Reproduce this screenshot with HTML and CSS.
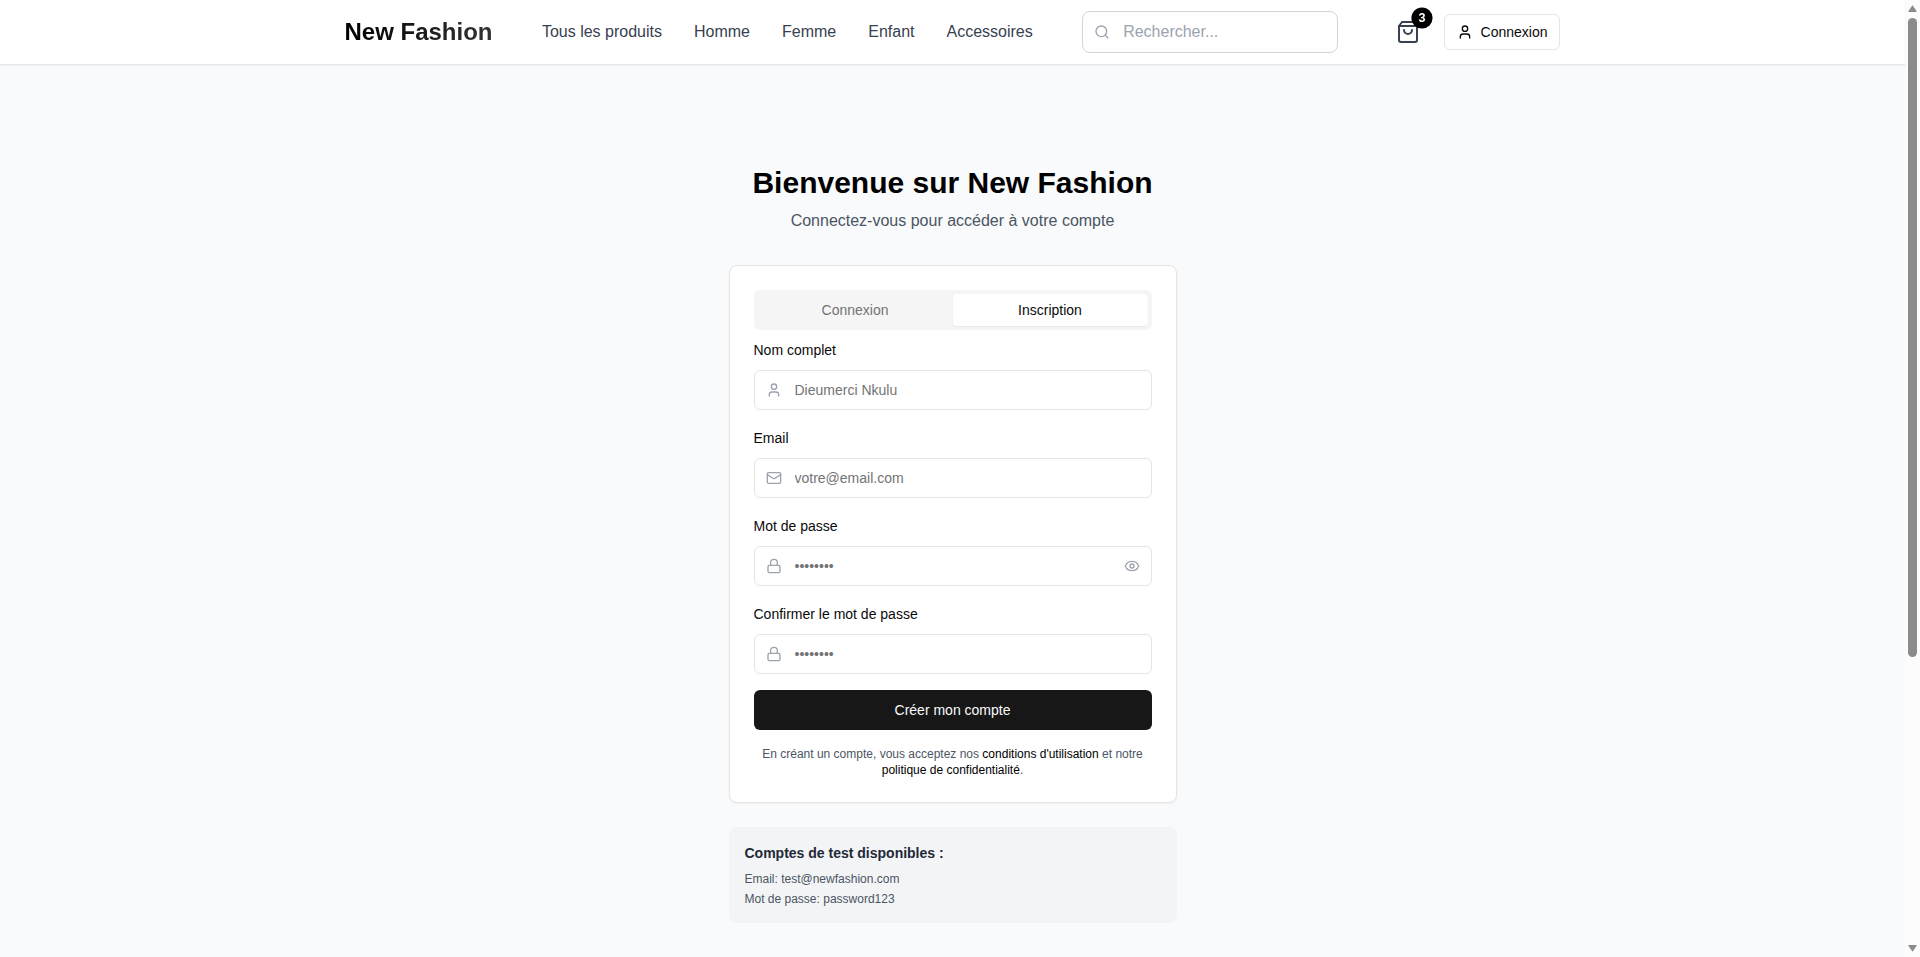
FILE: index.html
```html
<!DOCTYPE html>
<html lang="fr">
<head>
<meta charset="utf-8">
<title>New Fashion</title>
<link rel="stylesheet" href="styles.css">
</head>
<body>
<div class="viewport">
  <div class="page">
    <header class="header">
      <div class="header-inner">
        <a class="logo">New Fashion</a>
        <nav class="nav">
          <a>Tous les produits</a>
          <a>Homme</a>
          <a>Femme</a>
          <a>Enfant</a>
          <a>Accessoires</a>
        </nav>
        <div class="search">
          <svg class="icon field-icon" viewBox="0 0 24 24"><circle cx="11" cy="11" r="8"/><path d="m21 21-4.3-4.3"/></svg>
          <input class="search-input" type="text" placeholder="Rechercher...">
        </div>
        <div class="actions">
          <button class="cart" aria-label="Panier">
            <svg class="icon cart-icon" viewBox="0 0 24 24"><path d="M6 2 3 6v14a2 2 0 0 0 2 2h14a2 2 0 0 0 2-2V6l-3-4Z"/><path d="M3 6h18"/><path d="M16 10a4 4 0 0 1-8 0"/></svg>
            <span class="badge">3</span>
          </button>
          <button class="login">
            <svg class="icon" viewBox="0 0 24 24"><path d="M19 21v-2a4 4 0 0 0-4-4H9a4 4 0 0 0-4 4v2"/><circle cx="12" cy="7" r="4"/></svg>
            <span>Connexion</span>
          </button>
        </div>
      </div>
    </header>
    <main class="main">
      <div class="column">
        <div class="intro">
          <h1 class="title">Bienvenue sur New Fashion</h1>
          <p class="subtitle">Connectez-vous pour accéder à votre compte</p>
        </div>
        <section class="card">
          <div class="tabs">
            <button class="tab">Connexion</button>
            <button class="tab tab-active">Inscription</button>
          </div>
          <form class="form">
            <div class="group">
              <label class="label">Nom complet</label>
              <div class="field">
                <svg class="icon field-icon" viewBox="0 0 24 24"><path d="M19 21v-2a4 4 0 0 0-4-4H9a4 4 0 0 0-4 4v2"/><circle cx="12" cy="7" r="4"/></svg>
                <input class="input" type="text" placeholder="Dieumerci Nkulu">
              </div>
            </div>
            <div class="group">
              <label class="label">Email</label>
              <div class="field">
                <svg class="icon field-icon" viewBox="0 0 24 24"><rect width="20" height="16" x="2" y="4" rx="2"/><path d="m22 7-8.97 5.7a1.94 1.94 0 0 1-2.06 0L2 7"/></svg>
                <input class="input" type="email" placeholder="votre@email.com">
              </div>
            </div>
            <div class="group">
              <label class="label">Mot de passe</label>
              <div class="field">
                <svg class="icon field-icon" viewBox="0 0 24 24"><rect width="18" height="11" x="3" y="11" rx="2"/><path d="M7 11V7a5 5 0 0 1 10 0v4"/></svg>
                <input class="input" type="password" placeholder="••••••••">
                <svg class="icon field-icon field-icon-end" viewBox="0 0 24 24"><path d="M2.062 12.348a1 1 0 0 1 0-.696 10.75 10.75 0 0 1 19.876 0 1 1 0 0 1 0 .696 10.75 10.75 0 0 1-19.876 0"/><circle cx="12" cy="12" r="3"/></svg>
              </div>
            </div>
            <div class="group">
              <label class="label">Confirmer le mot de passe</label>
              <div class="field">
                <svg class="icon field-icon" viewBox="0 0 24 24"><rect width="18" height="11" x="3" y="11" rx="2"/><path d="M7 11V7a5 5 0 0 1 10 0v4"/></svg>
                <input class="input" type="password" placeholder="••••••••">
              </div>
            </div>
            <button class="submit" type="button">Créer mon compte</button>
            <p class="terms">En créant un compte, vous acceptez nos <a>conditions d'utilisation</a> et notre <a>politique de confidentialité</a>.</p>
          </form>
        </section>
        <section class="accounts">
          <h3 class="accounts-title">Comptes de test disponibles :</h3>
          <p>Email: test@newfashion.com</p>
          <p>Mot de passe: password123</p>
        </section>
      </div>
    </main>
  </div>
  <div class="scrollbar">
    <svg class="arrow" viewBox="0 0 9 7"><path d="M4.5 0.3 8.7 6.2Q8.8 7 8 7H1Q.2 7 .3 6.2Z"/></svg>
    <div class="thumb"></div>
    <svg class="arrow arrow-down" viewBox="0 0 9 7"><path d="M4.5 6.7 8.7 .8Q8.8 0 8 0H1Q.2 0 .3 .8Z"/></svg>
  </div>
</div>
</body>
</html>
```

FILE: styles.css
```css
* {
  box-sizing: border-box;
  margin: 0;
  padding: 0;
}

body {
  font-family: "Liberation Sans", Arial, sans-serif;
  font-size: 16px;
  line-height: 24px;
  color: #0a0a0a;
  overflow: hidden;
}

button,
input {
  font-family: inherit;
  background: none;
  border: 0;
  outline: 0;
}

.viewport {
  display: flex;
  height: 957px;
}

.page {
  flex: 1;
  background: #f9fafb;
}

/* Header */
.header {
  position: relative;
  height: 65px;
  background: #fff;
  border-bottom: 1px solid #e5e7eb;
  box-shadow: 0 1px 2px rgba(0, 0, 0, 0.05);
}

.header-inner {
  display: flex;
  align-items: center;
  justify-content: space-between;
  max-width: 1280px;
  height: 64px;
  margin: 0 auto;
  padding: 0 32px;
}

.logo {
  font-size: 24px;
  line-height: 32px;
  font-weight: 700;
  color: transparent;
  background: linear-gradient(90deg, #000, #333);
  background-clip: text;
  -webkit-background-clip: text;
}

.nav {
  display: flex;
  gap: 32px;
  color: #374151;
}

.icon {
  width: 16px;
  height: 16px;
  flex: none;
  fill: none;
  stroke: currentColor;
  stroke-width: 2;
  stroke-linecap: round;
  stroke-linejoin: round;
}

.search,
.field {
  position: relative;
}

.field-icon {
  position: absolute;
  left: 12px;
  top: 50%;
  transform: translateY(-50%);
  color: #9ca3af;
}

.field-icon-end {
  left: auto;
  right: 12px;
}

.search-input {
  display: block;
  width: 256px;
  height: 42px;
  padding: 8px 16px 8px 40px;
  font-size: 16px;
  border: 1px solid #d1d5db;
  border-radius: 8px;
}

.search-input::placeholder {
  color: #9ca3af;
}

.actions {
  display: flex;
  align-items: center;
  gap: 16px;
}

.cart {
  position: relative;
  padding: 8px;
  color: #374151;
}

.cart-icon {
  display: block;
  width: 24px;
  height: 24px;
}

.badge {
  position: absolute;
  top: -4px;
  right: -4px;
  width: 20px;
  height: 20px;
  border-radius: 50%;
  background: #000;
  color: #fff;
  font-size: 12px;
  line-height: 20px;
  font-weight: 700;
  text-align: center;
  transform: scale(1.06);
}

.login {
  display: flex;
  align-items: center;
  gap: 8px;
  height: 36px;
  padding: 0 12px;
  font-size: 14px;
  color: #0a0a0a;
  border: 1px solid #e5e5e5;
  border-radius: 6px;
}

/* Sign-up */
.main {
  display: flex;
  justify-content: center;
  padding-top: 100px;
}

.column {
  width: 448px;
}

.intro {
  margin-bottom: 32px;
  text-align: center;
}

.title {
  margin-bottom: 8px;
  font-size: 30px;
  line-height: 36px;
  font-weight: 700;
  color: #000;
}

.subtitle {
  color: #4b5563;
}

.card {
  padding: 24px;
  background: #fff;
  border: 1px solid #e5e5e5;
  border-radius: 8px;
  box-shadow: 0 1px 2px rgba(0, 0, 0, 0.05);
}

.tabs {
  display: grid;
  grid-template-columns: 1fr 1fr;
  height: 40px;
  padding: 4px;
  margin-bottom: 8px;
  background: #f5f5f5;
  border-radius: 6px;
}

.tab {
  font-size: 14px;
  line-height: 20px;
  color: #737373;
  border-radius: 4px;
}

.tab-active {
  color: #0a0a0a;
  background: #fff;
  box-shadow: 0 1px 2px rgba(0, 0, 0, 0.05);
}

.form {
  display: flex;
  flex-direction: column;
  gap: 16px;
}

.group {
  display: flex;
  flex-direction: column;
  gap: 8px;
}

.label {
  font-size: 14px;
  line-height: 24px;
}

.input {
  display: block;
  width: 100%;
  height: 40px;
  padding: 8px 40px;
  font-size: 14px;
  border: 1px solid #e5e5e5;
  border-radius: 6px;
}

.input::placeholder {
  color: #737373;
}

.submit {
  height: 40px;
  font-size: 14px;
  color: #fafafa;
  background: #171717;
  border-radius: 6px;
}

.terms {
  font-size: 12px;
  line-height: 16px;
  text-align: center;
  color: #4b5563;
}

.terms a {
  color: #000;
}

.accounts {
  display: flex;
  flex-direction: column;
  gap: 4px;
  margin-top: 24px;
  padding: 16px;
  font-size: 12px;
  line-height: 16px;
  color: #4b5563;
  background: #f3f4f6;
  border-radius: 8px;
}

.accounts-title {
  margin-bottom: 4px;
  font-size: 14px;
  line-height: 20px;
  color: #1f2937;
}

/* Scrollbar */
.scrollbar {
  display: flex;
  flex-direction: column;
  align-items: center;
  width: 15px;
  padding: 5px 0;
  background: #fcfcfc;
}

.arrow {
  width: 9px;
  height: 7px;
  fill: #8b8b8b;
}

.arrow-down {
  margin-top: auto;
}

.thumb {
  width: 9px;
  height: 639px;
  margin-top: 6px;
  border-radius: 5px;
  background: #8b8b8b;
}
```
